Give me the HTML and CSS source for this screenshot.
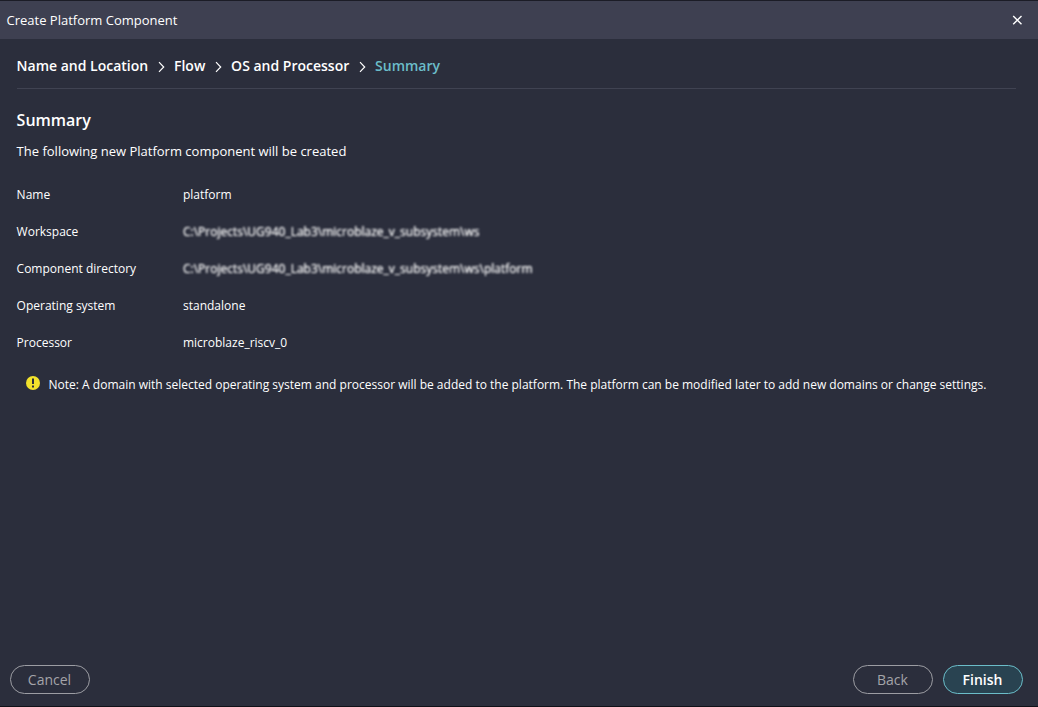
FILE: index.html
```
<!DOCTYPE html>
<html lang="en">
<head>
<meta charset="utf-8">
<title>Create Platform Component</title>
<link rel="stylesheet" href="styles.css">
</head>
<body>
<main class="dialog">
  <header class="titlebar">
    <span>Create Platform Component</span>
    <svg class="close" width="11" height="11" viewBox="0 0 11 11"><path d="M1.200 1l8.300 8.300M9.500 1l-8.300 8.300"/></svg>
  </header>
  <section class="content">
    <nav class="steps">
      <span class="step">Name and Location</span>
      <svg class="chevron" width="8" height="12" viewBox="0 0 8 12"><path d="M2 1.200L6.700 6l-4.700 4.800"/></svg>
      <span class="step">Flow</span>
      <svg class="chevron" width="8" height="12" viewBox="0 0 8 12"><path d="M2 1.200L6.700 6l-4.700 4.800"/></svg>
      <span class="step">OS and Processor</span>
      <svg class="chevron" width="8" height="12" viewBox="0 0 8 12"><path d="M2 1.200L6.700 6l-4.700 4.800"/></svg>
      <span class="step current">Summary</span>
    </nav>
    <h1>Summary</h1>
    <p class="lead">The following new Platform component will be created</p>
    <dl class="details">
      <dt>Name</dt><dd>platform</dd>
      <dt>Workspace</dt><dd><span class="obscured">C:\Projects\UG940_Lab3\microblaze_v_subsystem\ws</span></dd>
      <dt>Component directory</dt><dd><span class="obscured">C:\Projects\UG940_Lab3\microblaze_v_subsystem\ws\platform</span></dd>
      <dt>Operating system</dt><dd>standalone</dd>
      <dt>Processor</dt><dd>microblaze_riscv_0</dd>
    </dl>
    <div class="note">
      <svg class="warning" width="14" height="14" viewBox="0 0 14 14"><circle cx="7" cy="7" r="7" fill="#f2e22c"/><path d="M6 2.500h2v5.500H6z" fill="#2b2e3c"/><path d="M6 9.500h2v2H6z" fill="#2b2e3c"/></svg>
      <span>Note: A domain with selected operating system and processor will be added to the platform. The platform can be modified later to add new domains or change settings.</span>
    </div>
  </section>
  <footer class="actions">
    <button class="btn">Cancel</button>
    <button class="btn back">Back</button>
    <button class="btn primary">Finish</button>
  </footer>
</main>
</body>
</html>
```
FILE: styles.css
```
* { box-sizing: border-box; }
body { margin: 0; background: #2b2e3c; color: #fff; font: 13px "Open Sans", "Noto Sans", sans-serif; }
.dialog { height: 707px; display: flex; flex-direction: column; border-top: 1px solid #1b1c26; border-bottom: 1px solid #101118; }
.titlebar { height: 38px; padding: 0 15px 0 6.500px; background: #3e4051; display: flex; align-items: center; justify-content: space-between; }
.close, .chevron { fill: none; stroke: #fff; stroke-width: 1.4; }
.chevron { stroke-width: 1.2; margin: 2px 8.900px 0; }
.content { flex: 1; padding: 0 22px 0 16.600px; }
.steps { height: 50px; padding-top: 4px; display: flex; align-items: center; border-bottom: 1px solid #404352; font-size: 14px; font-weight: 600; white-space: nowrap; }
.current { color: #6bbdc9; }
h1 { margin: 19px 0 0; font-size: 16px; line-height: 24px; font-weight: 600; }
.lead { margin: 9px 0 0; line-height: 20px; }
.details { margin: 15px 0 0; display: grid; grid-template-columns: 166.400px 1fr; grid-auto-rows: 37px; align-items: center; font-size: 12px; }
dd { margin: 0; }
.obscured { filter: blur(1.2px); text-shadow: 0 0 1px #ffffffb3; }
.note { display: flex; align-items: center; gap: 8.600px; margin: 15px 0 0 9.400px; font-size: 12px; line-height: 18px; white-space: nowrap; }
.warning { margin-bottom: 4px; }
.actions { height: 52px; padding: 0 15px 2px 10px; display: flex; align-items: center; gap: 10px; }
.btn { width: 80px; height: 29px; padding: 0 1px 0 0; border: 1px solid #9c9da3; border-radius: 15px; background: transparent; color: #a4a4a9; font: 14px "Open Sans", sans-serif; }
.back { margin-left: auto; }
.primary { border-color: #6bbdc9; background: #294351; color: #fff; font-weight: 600; }
```
